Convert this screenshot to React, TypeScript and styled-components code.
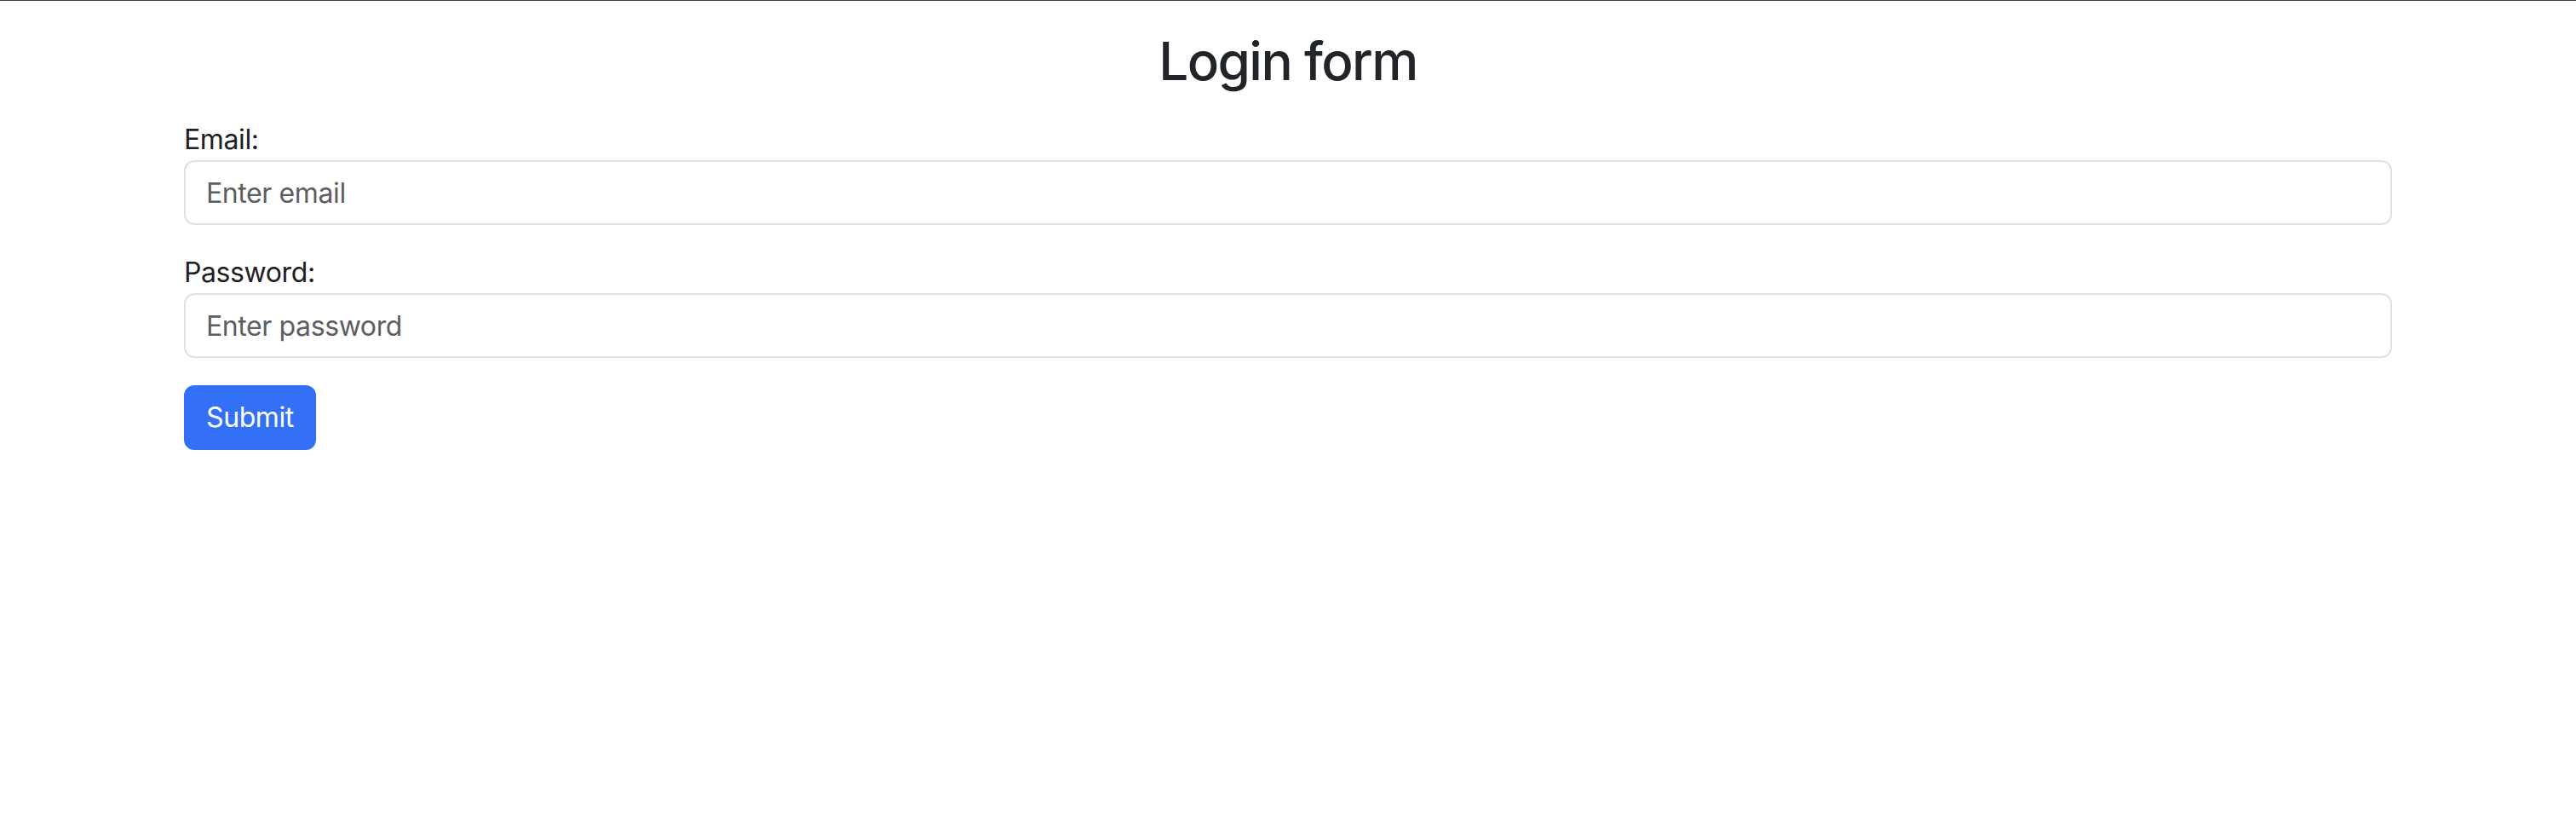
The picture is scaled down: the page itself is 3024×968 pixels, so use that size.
import styled, { createGlobalStyle } from "styled-components";

const GlobalStyle = createGlobalStyle`
  html, body {
    margin: 0;
    padding: 0;
    background: #ffffff;
  }
  body {
    font-family: Inter, "Noto Sans", "Liberation Sans", sans-serif;
    color: #212529;
    border-top: 1px solid #3a3a3a;
  }
  * {
    box-sizing: border-box;
  }
`;

const App: React.FC = () => {
  return (
    <>
      <GlobalStyle />
      <Container>
        <Title>Login form</Title>
        <Form onSubmit={(e) => e.preventDefault()}>
          <FormGroup>
            <Label htmlFor="email">Email:</Label>
            <Input id="email" type="email" placeholder="Enter email" />
          </FormGroup>
          <FormGroup>
            <Label htmlFor="pwd">Password:</Label>
            <Input id="pwd" type="password" placeholder="Enter password" />
          </FormGroup>
          <SubmitButton type="submit">Submit</SubmitButton>
        </Form>
      </Container>
    </>
  );
};

export default App;

// --- Styled Components ---

const Container = styled.div`
  max-width: 2640px;
  margin: 0 auto;
  padding: 0 24px;
  width: 100%;
`;

const Title = styled.h2`
  margin: 33px 0 30px;
  text-align: center;
  font-size: 62px;
  font-weight: 500;
  line-height: 76px;
  letter-spacing: -1.6px;
  color: #212529;
`;

const Form = styled.form`
  display: flex;
  flex-direction: column;
  align-items: flex-start;
`;

const FormGroup = styled.div`
  display: flex;
  flex-direction: column;
  width: 100%;
  margin-bottom: 32px;
`;

const Label = styled.label`
  font-size: 32px;
  line-height: 48px;
  font-weight: 400;
  letter-spacing: -0.4px;
  color: #1d2024;
`;

const Input = styled.input`
  width: 100%;
  height: 76px;
  padding: 12px 24px;
  font-family: inherit;
  font-size: 32px;
  line-height: 48px;
  letter-spacing: -0.4px;
  color: #212529;
  background: #ffffff;
  border: 2px solid #dee2e6;
  border-radius: 12px;
  outline: none;

  &::placeholder {
    color: #5b5e62;
  }
`;

const SubmitButton = styled.button`
  height: 76px;
  padding: 12px 24px;
  font-family: inherit;
  font-size: 32px;
  line-height: 48px;
  letter-spacing: -0.4px;
  color: #ffffff;
  background-color: #3370f5;
  border: 2px solid #3370f5;
  border-radius: 12px;
  cursor: pointer;
`;
